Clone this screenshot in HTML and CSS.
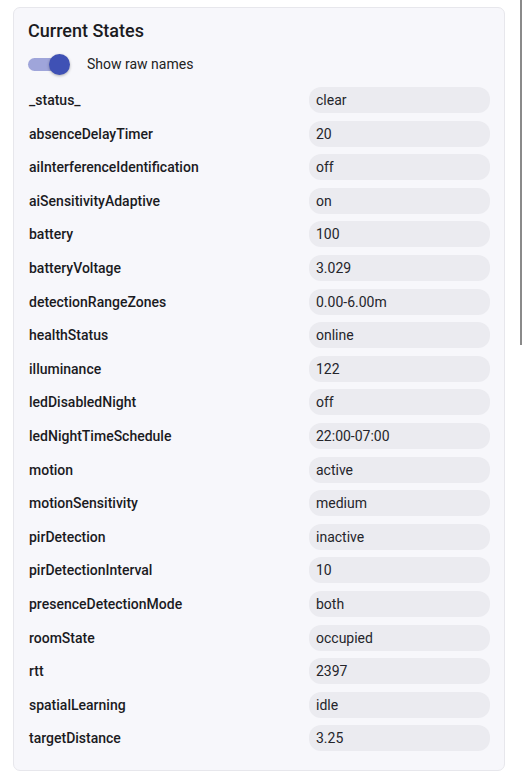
FILE: index.html
```html
<!DOCTYPE html>
<html>
<head>
<meta charset="utf-8">
<link rel="stylesheet" href="styles.css">
</head>
<body>
<div class="card">
  <h2 class="title">Current States</h2>
  <div class="toggle-row">
    <span class="switch"><span class="track"></span><span class="thumb"></span></span>
    <span class="toggle-label">Show raw names</span>
  </div>
  <div class="states">
    <div class="name">_status_</div><div class="value">clear</div>
    <div class="name">absenceDelayTimer</div><div class="value">20</div>
    <div class="name">aiInterferenceIdentification</div><div class="value">off</div>
    <div class="name">aiSensitivityAdaptive</div><div class="value">on</div>
    <div class="name">battery</div><div class="value">100</div>
    <div class="name">batteryVoltage</div><div class="value">3.029</div>
    <div class="name">detectionRangeZones</div><div class="value">0.00-6.00m</div>
    <div class="name">healthStatus</div><div class="value">online</div>
    <div class="name">illuminance</div><div class="value">122</div>
    <div class="name">ledDisabledNight</div><div class="value">off</div>
    <div class="name">ledNightTimeSchedule</div><div class="value">22:00-07:00</div>
    <div class="name">motion</div><div class="value">active</div>
    <div class="name">motionSensitivity</div><div class="value">medium</div>
    <div class="name">pirDetection</div><div class="value">inactive</div>
    <div class="name">pirDetectionInterval</div><div class="value">10</div>
    <div class="name">presenceDetectionMode</div><div class="value">both</div>
    <div class="name">roomState</div><div class="value">occupied</div>
    <div class="name">rtt</div><div class="value">2397</div>
    <div class="name">spatialLearning</div><div class="value">idle</div>
    <div class="name">targetDistance</div><div class="value">3.25</div>
  </div>
</div>
<div class="scrollbar"></div>
</body>
</html>
```
FILE: styles.css
```css
html, body {
  margin: 0;
  padding: 0;
  background: #ffffff;
  font-family: Roboto, "Liberation Sans", sans-serif;
  color: #1f1f24;
}
body {
  padding: 7px 0 0 13px;
  overflow: hidden;
  height: 766px;
}
.card {
  width: 492px;
  box-sizing: border-box;
  background: #f7f7fb;
  border: 1px solid #e7e7ec;
  border-radius: 7px;
  padding: 11px 14px 19px 15px;
}
.title {
  margin: 0 0 0 -1px;
  font-size: 18px;
  line-height: 24px;
  font-weight: 500;
  color: #1b1b1f;
}
.toggle-row {
  display: flex;
  align-items: center;
  height: 20px;
  margin-top: 11px;
}
.switch {
  position: relative;
  width: 42px;
  height: 21px;
  margin-left: -1px;
  display: inline-block;
}
.track {
  position: absolute;
  left: 0;
  top: 4px;
  width: 36px;
  height: 13px;
  border-radius: 7px;
  background: #9fa5da;
}
.thumb {
  position: absolute;
  left: 21px;
  top: 0;
  width: 21px;
  height: 21px;
  border-radius: 50%;
  background: #3f51b5;
  box-shadow: 0 1px 3px rgba(0,0,0,0.3);
}
.toggle-label {
  margin-left: 17px;
  font-size: 14px;
  color: #222;
}
.states {
  display: grid;
  grid-template-columns: 1fr 181px;
  column-gap: 8px;
  row-gap: 7.6px;
  margin-top: 13px;
}
.name {
  font-size: 14px;
  font-weight: 500;
  line-height: 26px;
  color: #1b1b1f;
}
.value {
  height: 26px;
  line-height: 26px;
  background: #ebebf0;
  border-radius: 12px;
  padding-left: 7px;
  font-size: 14px;
  color: #25252b;
}
.scrollbar {
  position: absolute;
  top: 0;
  left: 520px;
  width: 2px;
  height: 345px;
  background: #8a8a8a;
}
```
